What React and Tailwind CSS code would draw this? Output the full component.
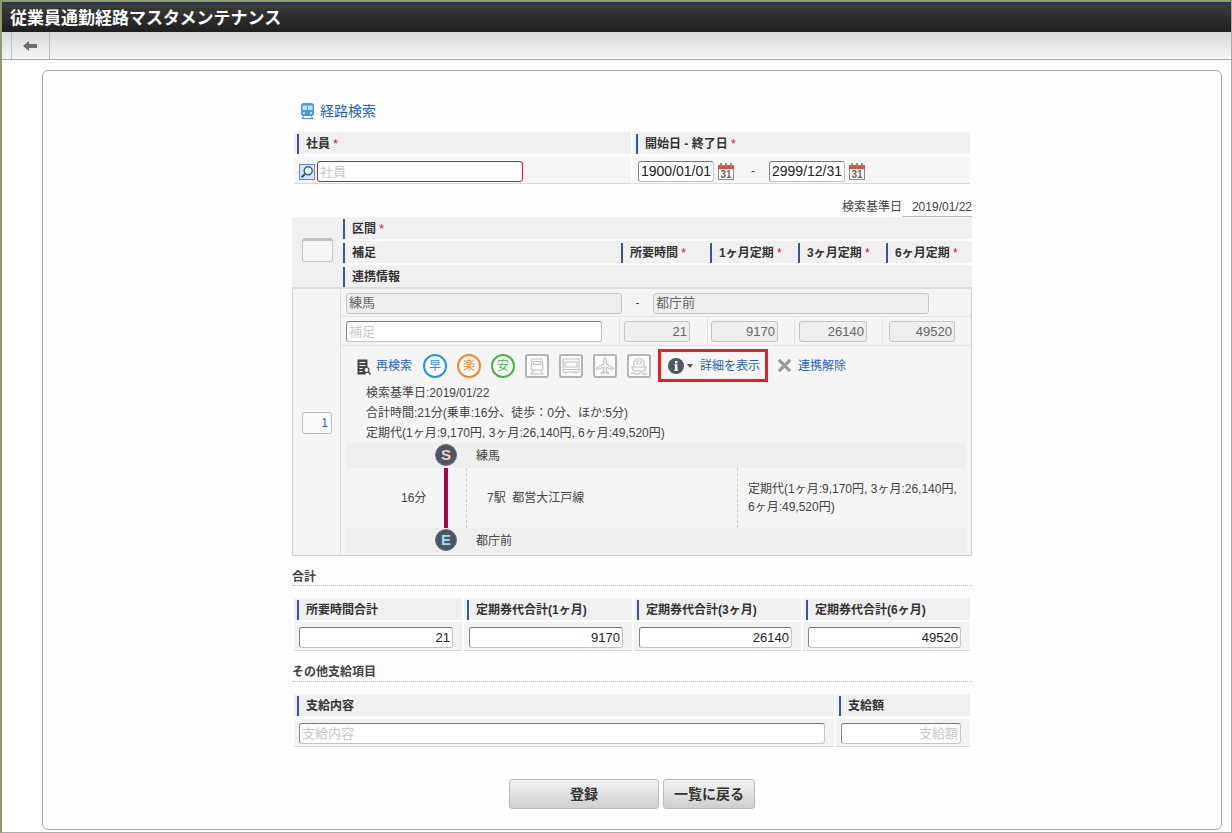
const FONT = "font-['Liberation_Sans','Noto_Sans_CJK_JP',sans-serif]";

function Head({ children, star }) {
  return (
    <div className="h-[22px] bg-[#f0f0f0] flex items-center pt-[2px]">
      <span className="w-[2px] h-[20px] bg-[#3a5596] ml-[3px] mr-[7px] shrink-0" />
      <span className="font-bold text-[#333] text-[12px] whitespace-nowrap">
        {children}
        {star && <span className="text-[#e3003a] font-normal"> *</span>}
      </span>
    </div>
  );
}

function Train() {
  return (
    <svg viewBox="0 0 13 16" className="w-[13px] h-[16px] shrink-0">
      <path d="M0 2.500Q0 0 3 0h7q3 0 3 2.500V11q0 2-2.500 2h-8Q0 13 0 11z" fill="#4a9bdc" />
      <rect x="1.500" y="2.500" width="10" height="4.500" fill="#bfe0f7" />
      <rect x="6" y="2.500" width="1" height="4.500" fill="#4a9bdc" />
      <circle cx="3" cy="10" r="1.100" fill="#e4f2fc" />
      <circle cx="10" cy="10" r="1.100" fill="#e4f2fc" />
      <path d="M3 13l-2 2.500M10 13l2 2.500M.5 15.500h12" stroke="#4a9bdc" strokeWidth="1.100" fill="none" />
    </svg>
  );
}

function Calendar() {
  return (
    <svg viewBox="0 0 16 17" className="w-[16px] h-[17px] shrink-0">
      <rect x="0.500" y="3" width="15" height="13.500" fill="#fff" stroke="#8c8c8c" />
      <rect x="0" y="2" width="16" height="4" fill="#ea4b3c" />
      <rect x="2" y="0" width="2" height="3.500" fill="#8c8c8c" />
      <rect x="7" y="0" width="2" height="3.500" fill="#8c8c8c" />
      <rect x="12" y="0" width="2" height="3.500" fill="#8c8c8c" />
      <text x="8" y="15" textAnchor="middle" fontSize="10" fontWeight="700" fill="#666" fontFamily="Liberation Sans">31</text>
    </svg>
  );
}

function Lens() {
  return (
    <span className="mt-[3px] w-[16px] h-[16px] border border-[#5b8fc0] bg-[#d7e6f4] flex items-center justify-center shrink-0">
      <svg viewBox="0 0 14 14" className="w-[14px] h-[14px]">
        <circle cx="8.200" cy="5.800" r="4" fill="#fff" stroke="#2c628f" strokeWidth="1.500" />
        <path d="M5.200 8.800L1.500 12.500" stroke="#2c628f" strokeWidth="2.200" />
      </svg>
    </span>
  );
}

function Input({ value, placeholder, className = "", right, disabled, tone }) {
  const edge = tone || (disabled ? "border-[#c4c4c4] bg-[#eee] text-[#666]" : "border-[#c4c4c4] border-t-[#777] border-l-[#888] bg-white");
  return (
    <div
      className={`h-[21px] rounded-[3px] border flex items-center px-[2px] text-[13px] whitespace-nowrap overflow-hidden ${right ? "justify-end" : ""} ${edge} ${placeholder ? "text-[#c8c8c8]" : ""} ${className}`}
    >
      {value || placeholder}
    </div>
  );
}

function Circle({ label, color }) {
  return (
    <span
      className="w-[24px] h-[24px] rounded-full border-2 bg-white flex items-center justify-center text-[12px] shrink-0"
      style={{ borderColor: color, color }}
    >
      {label}
    </span>
  );
}

function Mode({ children }) {
  return (
    <span className="w-[24px] h-[24px] rounded-[3px] border-2 border-[#b4b4b4] bg-[#fbfbfb] flex items-center justify-center shrink-0">
      <svg viewBox="0 0 20 20" className="w-[20px] h-[20px]" fill="none" stroke="#c4c4c4" strokeWidth="1.200">
        {children}
      </svg>
    </span>
  );
}

function StationDot({ label, color }) {
  return (
    <span className="absolute left-[89px] top-[1px] w-[22px] h-[22px] rounded-full bg-[#4d5564] border border-[#6b7280] flex items-center justify-center font-bold text-[15px]" style={{ color }}>
      {label}
    </span>
  );
}

function Total({ label, value }) {
  return (
    <div>
      <Head>{label}</Head>
      <div className="mt-[2px] h-[29px] bg-[#f3f3f3] border-b border-[#d8d8d8] flex items-start pt-[5px] pl-[5px] pr-[9px]">
        <Input value={value} right className="w-full text-[#222]" />
      </div>
    </div>
  );
}

export default function App() {
  return (
    <div className={`${FONT} w-[1232px] h-[833px] overflow-hidden bg-white text-[12px] text-[#444] border-l-2 border-l-[#8e9a72] border-t-[2px] border-t-[#8e9a72] border-r border-r-[#aaa] border-b border-b-[#aaa] flex flex-col`}>
      <header className="h-[30px] shrink-0 border-t-2 border-t-[#24345a] bg-gradient-to-b from-[#3c3c3c] to-[#1f1f1f] flex items-center pl-[8px]">
        <h1 className="text-white font-bold text-[17px] leading-none">従業員通勤経路マスタメンテナンス</h1>
      </header>

      <nav className="h-[28px] shrink-0 bg-gradient-to-b from-[#d8d8d8] to-[#f6f6f6] border-b border-[#aaa] pl-[9px] flex">
        <button className="w-[39px] border-x border-[#bbb] flex items-center justify-center pr-[2px]">
          <svg viewBox="0 0 14 12" className="w-[14px] h-[12px]">
            <path d="M0 6L6 1v3h8v4H6v3z" fill="#6b6b6b" />
          </svg>
        </button>
      </nav>

      <main className="mt-[10px] ml-[40px] mr-[9px] h-[760px] shrink-0 bg-[#fdfdff] border border-[#aaa] rounded-[6px] flex justify-center">
        <div className="w-[680px] pt-[30px]">
          <div className="flex items-center h-[20px] pl-[9px] gap-[6px] text-[#2a62c4] text-[14px]">
            <Train />
            <span>経路検索</span>
          </div>

          <section className="mt-[11px] ml-[2px] mr-[2px] grid grid-cols-[337px_337px] gap-x-[2px]">
            <Head star>社員</Head>
            <Head star>開始日 - 終了日</Head>
            <div className="mt-[3px] h-[27px] bg-[#f6f6f6] border-b border-[#d8d8d8] flex items-start pt-[4px] pl-[5px] gap-[2px]">
              <Lens />
              <Input placeholder="社員" tone="border-[#d0144e] bg-white" className="w-[206px]" />
            </div>
            <div className="mt-[3px] h-[27px] bg-[#f6f6f6] border-b border-[#d8d8d8] flex items-start pt-[4px] pl-[5px]">
              <Input value="1900/01/01" className="w-[76px] text-[#222] !text-[14px]" />
              <span className="ml-[4px] mt-[2px]"><Calendar /></span>
              <span className="ml-[17px] w-[18px] leading-[21px]">-</span>
              <Input value="2999/12/31" className="w-[76px] text-[#222] !text-[14px]" />
              <span className="ml-[4px] mt-[2px]"><Calendar /></span>
            </div>
          </section>

          <div className="mt-[14px] flex justify-end h-[19px] leading-[19px]">
            <span>検索基準日</span>
            <span className="w-[70px] text-right h-full border-b border-[#bbb]">2019/01/22</span>
          </div>

          <section className="grid grid-cols-[48px_1fr] border-b-2 border-[#ddd] bg-[#f0f0f0] h-[72px]">
            <div className="flex items-center justify-center pb-[4px] pl-[2px]">
              <span className="w-[31px] h-[24px] rounded-[3px] border border-[#c4c4c4] border-t-[3px] bg-[#f6f6f6]" />
            </div>
            <div className="flex flex-col gap-[2px] bg-white">
              <Head star>区間</Head>
              <div className="grid grid-cols-[278px_89px_88px_88px_89px] bg-[#f0f0f0]">
                <Head>補足</Head>
                <Head star>所要時間</Head>
                <Head star>1ヶ月定期</Head>
                <Head star>3ヶ月定期</Head>
                <Head star>6ヶ月定期</Head>
              </div>
              <Head>連携情報</Head>
            </div>
          </section>

          <section className="grid grid-cols-[48px_1fr] border border-t-0 border-[#ccc] bg-[#f5f5f5] h-[267px]">
            <div className="border-r border-[#ddd] flex items-center justify-center pt-[1px] pl-[1px]">
              <span className="w-[30px] h-[22px] rounded-[3px] border border-[#bbb] bg-[#fafafa] text-right pr-[3px] leading-[20px] text-[#2a62c4]">1</span>
            </div>
            <div>
              <div className="h-[28px] flex items-center pt-[1px] pl-[5px] border-b border-[#e2e2e2]">
                <Input value="練馬" disabled className="w-[276px]" />
                <span className="w-[31px] text-center">-</span>
                <Input value="都庁前" disabled className="w-[276px]" />
              </div>
              <div className="h-[29px] grid grid-cols-[279px_88px_87px_88px_1fr] border-b border-[#e2e2e2] pt-[1px]">
                <div className="flex items-center pl-[5px] border-r border-[#e2e2e2]">
                  <Input placeholder="補足" className="w-[256px]" />
                </div>
                {[["21", 66, 4], ["9170", 67, 3], ["26140", 68, 4], ["49520", 66, 6]].map(([v, w, p]) => (
                  <div key={v} className="flex items-center border-r last:border-r-0 border-[#e2e2e2]" style={{ paddingLeft: p }}>
                    <div className="h-[21px] rounded-[3px] border border-[#c4c4c4] bg-[#eee] text-[#666] text-right text-[13px] pr-[2px] leading-[19px]" style={{ width: w }}>{v}</div>
                  </div>
                ))}
              </div>

              <div className="h-[37px] flex items-center pt-[2px] pl-[16px]">
                <svg viewBox="0 0 14 16" className="w-[14px] h-[16px] mt-[2px] shrink-0">
                  <path d="M.5.500h10v10l-2 5H.5z" fill="#444" />
                  <path d="M2.500 3h6v1h-6zM2.500 6h6v1h-6zM2.500 9h3v1h-3zM2.500 12h3v1h-3z" fill="#fff" />
                  <circle cx="9.500" cy="11" r="2.500" fill="#fff" stroke="#444" strokeWidth="1.200" />
                  <path d="M11.300 12.800l2.400 2.700" stroke="#444" strokeWidth="1.400" />
                </svg>
                <a className="ml-[5px] text-[#2a62c4]">再検索</a>
                <span className="ml-[11px] flex gap-[10px]">
                  <Circle label="早" color="#2b8fee" />
                  <Circle label="楽" color="#f5882a" />
                  <Circle label="安" color="#4cae4c" />
                  <Mode>
                    <path d="M5 3h10l1 9q0 2-2 2H6q-2 0-2-2zM6.500 5.500h7v3h-7zM7 14l-3 4h12l-3-4M7 11h.1M13 11h.1" />
                  </Mode>
                  <Mode>
                    <path d="M2 3h16v13H2zM4 6h12v5H4zM2 13.500h16M5 16v2M15 16v2" />
                  </Mode>
                  <Mode>
                    <path d="M10 1.500q1.300 1 1.300 3v3.500l7 4v1.500l-7-2v3.500l2 1.500v1l-3.300-1-3.300 1v-1l2-1.500v-3.500l-7 2V12l7-4V4.500q0-2 1.300-3z" />
                  </Mode>
                  <Mode>
                    <path d="M7 3h6l2 3v5H5V6zM8 5h4v3H8zM3 11h14l-1.500 4h-11zM2 17.500q2-1.500 4 0t4 0 4 0 4 0" />
                  </Mode>
                </span>
                <span className="ml-[7px] w-[110px] h-[33px] border-[3px] border-[#ee1c25] flex items-center pl-[7px] shrink-0">
                  <svg viewBox="0 0 16 16" className="w-[16px] h-[16px] shrink-0">
                    <circle cx="8" cy="8" r="8" fill="#4e5767" />
                    <rect x="7" y="6.500" width="2.400" height="6" fill="#fff" />
                    <rect x="7" y="3" width="2.400" height="2.400" fill="#fff" />
                    <rect x="6" y="6.500" width="3" height="1" fill="#fff" />
                    <rect x="6" y="11.600" width="4.400" height="1" fill="#fff" />
                  </svg>
                  <span className="ml-[3px] w-0 h-0 border-x-[3px] border-x-transparent border-t-[4px] border-t-[#555]" />
                  <a className="ml-[7px] text-[#2a62c4] whitespace-nowrap">詳細を表示</a>
                </span>
                <svg viewBox="0 0 16 16" className="ml-[9px] w-[15px] h-[15px] shrink-0">
                  <path d="M2 2l12 12M14 2L2 14" stroke="#9a9a9a" strokeWidth="3.400" />
                </svg>
                <a className="ml-[6px] text-[#2a62c4] whitespace-nowrap">連携解除</a>
              </div>

              <div className="pl-[25px] leading-[20px] h-[60px]">
                <p>検索基準日:2019/01/22</p>
                <p>合計時間:21分(乗車:16分、徒歩：0分、ほか:5分)</p>
                <p>定期代(1ヶ月:9,170円, 3ヶ月:26,140円, 6ヶ月:49,520円)</p>
              </div>

              <div className="mx-[5px] relative">
                <div className="relative h-[25px] bg-[#efefef] flex items-center pl-[130px]">
                  <StationDot label="S" color="#f3c8c8" />
                  練馬
                </div>
                <div className="h-[60px] grid grid-cols-[120px_271px_1fr] items-center">
                  <div className="relative h-full flex items-center pl-[55px]">
                    16分
                    <span className="absolute left-[98px] top-0 bottom-0 w-[4px] bg-[#ad004e]" />
                  </div>
                  <div className="h-full border-l border-dashed border-[#ccc] flex items-center pl-[20px]">
                    7駅&nbsp;&nbsp;都営大江戸線
                  </div>
                  <div className="h-full border-l border-dashed border-[#ccc] flex items-center pl-[10px] leading-[18px]">
                    <span>定期代(1ヶ月:9,170円, 3ヶ月:26,140円,<br />6ヶ月:49,520円)</span>
                  </div>
                </div>
                <div className="relative h-[25px] bg-[#efefef] flex items-center pl-[130px]">
                  <StationDot label="E" color="#9fdcf2" />
                  都庁前
                </div>
              </div>
            </div>
          </section>

          <h2 className="mt-[13px] h-[17px] leading-[17px] font-bold text-[#444] border-b border-dotted border-[#bbb]">合計</h2>
          <section className="mt-[12px] ml-[2px] mr-[2px] grid grid-cols-[168px_168px_167px_167px] gap-x-[2px]">
            <Total label="所要時間合計" value="21" />
            <Total label="定期券代合計(1ヶ月)" value="9170" />
            <Total label="定期券代合計(3ヶ月)" value="26140" />
            <Total label="定期券代合計(6ヶ月)" value="49520" />
          </section>

          <h2 className="mt-[12px] h-[19px] leading-[19px] font-bold text-[#444] border-b border-dotted border-[#bbb]">その他支給項目</h2>
          <section className="mt-[12px] ml-[2px] mr-[2px] grid grid-cols-[540px_134px] gap-x-[2px]">
            <div>
              <Head>支給内容</Head>
              <div className="mt-[3px] h-[28px] bg-[#f3f3f3] border-b border-[#d8d8d8] flex items-start pt-[4px] pl-[5px] pr-[9px]">
                <Input placeholder="支給内容" className="w-full" />
              </div>
            </div>
            <div>
              <Head>支給額</Head>
              <div className="mt-[3px] h-[28px] bg-[#f3f3f3] border-b border-[#d8d8d8] flex items-start pt-[4px] pl-[5px] pr-[9px]">
                <Input placeholder="支給額" right className="w-full" />
              </div>
            </div>
          </section>

          <div className="mt-[32px] flex justify-center gap-[4px]">
            <button className="w-[150px] h-[30px] rounded-[3px] border border-[#bbb] bg-gradient-to-b from-[#f4f4f4] to-[#cfcfcf] font-bold text-[#333] text-[14px]">登録</button>
            <button className="w-[92px] h-[30px] rounded-[3px] border border-[#bbb] bg-gradient-to-b from-[#f4f4f4] to-[#cfcfcf] font-bold text-[#333] text-[14px]">一覧に戻る</button>
          </div>
        </div>
      </main>
    </div>
  );
}
